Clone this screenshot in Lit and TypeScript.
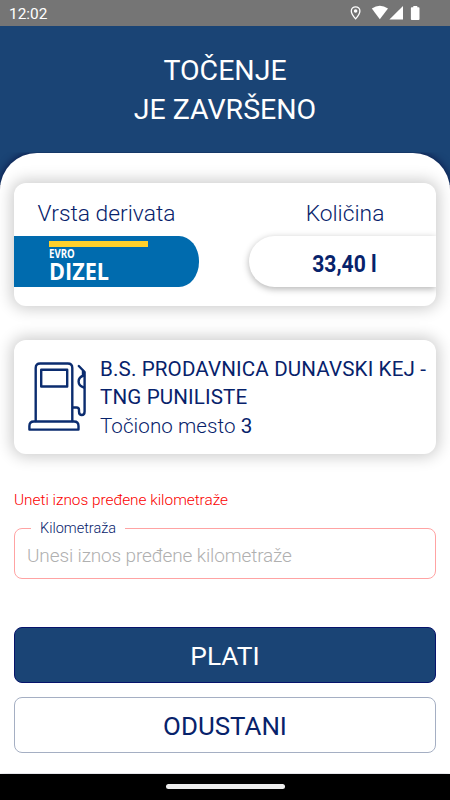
import { LitElement, html, css } from "lit";
import { customElement } from "lit/decorators.js";

@customElement("app-root")
export class AppRoot extends LitElement {
  static styles = css`
    :host {
      display: flex;
      flex-direction: column;
      width: 450px;
      height: 800px;
      overflow: hidden;
      background: #fff;
      color: #07226b;
      font-family: Roboto, "Liberation Sans", sans-serif;
    }
    * { box-sizing: border-box; }
    span, h1, p { white-space: nowrap; margin: 0; }
    svg { display: block; }
    .status {
      height: 26px;
      flex: none;
      background: #757575;
      color: #fff;
      display: flex;
      justify-content: space-between;
      padding-left: 9px;
      font-size: 15.4px;
      line-height: 28px;
    }
    .head {
      height: 126.5px;
      flex: none;
      background: #1a4475;
      color: #fff;
      text-align: center;
      padding-top: 25px;
    }
    h1 { font-size: 28.5px; line-height: 39px; font-weight: 400; }
    .wrap { flex: 1; background: linear-gradient(#1a4475 32px, #fff 32px); min-height: 0; }
    .sheet {
      height: 621px;
      background: #fff;
      border-radius: 37px 37px 0 0;
      box-shadow: 0 0 9px rgba(0, 0, 50, .75);
      padding: 30.5px 14px 0;
    }
    .back { clip-path: inset(0); height: 621px; }
    .card {
      background: #fff;
      border-radius: 12px;
      box-shadow: 0 0 15px 3px rgba(0, 0, 0, .2);
    }
    .fuel {
      height: 122.5px;
      display: grid;
      grid-template-columns: 185px 187px;
      grid-template-rows: 52.5px 51px;
      justify-content: space-between;
      text-align: center;
      overflow: hidden;
    }
    .label { font-size: 22.8px; font-weight: 300; line-height: 62px; }
    .shift { padding-left: 5px; }
    .badge {
      background: #006bae;
      border-radius: 0 20px 20px 0 / 0 25px 25px 0;
      color: #fff;
      padding: 5px 0 0 35px;
      display: flex;
      flex-direction: column;
      align-items: flex-start;
      font-family: "Open Sans", "Noto Sans", sans-serif;
      font-weight: 700;
    }
    .stripe { width: 98.5px; height: 6px; background: #ffd02b; }
    .evro { font-size: 11.5px; line-height: 12px; margin-top: 1px; transform: scaleX(.84); transform-origin: 0 0; }
    .dizel { font-size: 24px; line-height: 22px; transform: scaleX(.9); transform-origin: 0 0; }
    .qty {
      border-radius: 26px 0 0 26px;
      box-shadow: 0 2px 7px rgba(0, 0, 0, .3);
      font-size: 24.5px;
      font-weight: 700;
      line-height: 56px;
      padding-left: 4px;
    }
    .qty span { display: inline-block; transform: scaleX(.86); }
    .station {
      height: 114px;
      margin-top: 34px;
      display: flex;
      gap: 14px;
      padding: 15.2px 0 0 14px;
      font-size: 20.6px;
      letter-spacing: .13px;
      line-height: 28.7px;
    }
    .station svg { margin-top: 6.8px; flex: none; }
    .light { font-weight: 300; letter-spacing: .05px; }
    .error { color: #fb0000; font-size: 15.4px; font-weight: 300; line-height: 20px; margin-top: 36px; letter-spacing: -.03px; }
    .field {
      margin: 0;
      margin-top: 10px;
      height: 59px;
      border: 1px solid #ffa3a3;
      border-radius: 8px;
      padding: 0 0 0 12px;
      min-width: 0;
    }
    legend { font-size: 14.5px; font-weight: 300; line-height: 17px; padding: 0 9px; margin-left: 4px; }
    .hint { color: #b0b0b0; font-size: 19px; font-weight: 300; line-height: 24px; margin-top: 7px; letter-spacing: -.13px; }
    .btn {
      width: 422px;
      height: 56px;
      display: block;
      border-radius: 8px;
      font-family: inherit;
      font-size: 26.3px;
      line-height: 54px;
      padding: 1px 0 0;
      text-align: center;
    }
    .pay { background: #1a4475; color: #fff; border: 1px solid #06136b; margin-top: 48px; }
    .cancel { background: #fff; color: #07226b; border: 1px solid #a5afc3; margin-top: 14px; font-size: 25.9px; }
    .nav { height: 26.5px; flex: none; background: #000; padding: 10px 0 0 165.5px; }
    .pill { width: 119px; height: 5px; border-radius: 3px; background: #eee; }
  `;

  render() {
    return html`
      <div class="status">
        <span>12:02</span>
        <svg width="105" height="26" viewBox="345 0 105 26" fill="#fff">
          <path d="M355.6 6.8a4.3 4.3 0 0 0-4.3 4.3c0 3.2 4.3 7.8 4.3 7.8s4.3-4.6 4.3-7.8a4.3 4.3 0 0 0-4.3-4.3z" fill="none" stroke="#fff" stroke-width="1.3" />
          <circle cx="355.6" cy="11" r="1.8" />
          <path d="M371.8 8.5Q379.8 3 388 8.5L379.8 19.3z" />
          <path d="M403 6v13.6h-13.6z" />
          <path d="M411.8 7.2h1.500V6h4v1.200h1.300q.9 0 .9.900v11q0 .9-.9.900h-6.800q-.9 0-.9-.9v-11q0-.9.900-.9z" />
        </svg>
      </div>
      <div class="head">
        <h1>TOČENJE<br />JE ZAVRŠENO</h1>
      </div>
      <div class="wrap">
        <div class="back">
          <div class="sheet">
            <div class="card fuel">
              <span class="label">Vrsta derivata</span>
              <span class="label shift">Količina</span>
              <div class="badge">
                <div class="stripe"></div>
                <span class="evro">EVRO</span>
                <span class="dizel">DIZEL</span>
              </div>
              <div class="qty"><span>33,40 l</span></div>
            </div>
            <div class="card station">
              <svg width="58" height="70" viewBox="0 0 58 70" fill="none" stroke="#0b2c6f" stroke-width="2.4" stroke-linecap="round" stroke-linejoin="round">
                <path d="M7.700 60V7Q7.700 2.500 12.200 2.500H39.800Q44.300 2.500 44.300 7V60" />
                <path d="M13.200 8.700H39.200V25.500H13.200z" />
                <path d="M1.400 68.600V65Q1.400 60.500 5.900 60.500H46Q50.500 60.500 50.500 65V68.600z" />
                <path d="M50.800 5L56.600 11V50.500Q56.600 54 53.800 54Q51 54 51 50.500V49Q51 46.500 48.500 46.500H45" />
                <path d="M56 14.500Q50.600 16 50.600 20.500Q50.600 25 56 26.500M55 10V14.500" />
              </svg>
              <div>
                <p>B.S. PRODAVNICA DUNAVSKI KEJ -</p>
                <p>TNG PUNILISTE</p>
                <p><span class="light">Točiono mesto</span> 3</p>
              </div>
            </div>
            <p class="error">Uneti iznos pređene kilometraže</p>
            <fieldset class="field">
              <legend>Kilometraža</legend>
              <p class="hint">Unesi iznos pređene kilometraže</p>
            </fieldset>
            <button class="btn pay">PLATI</button>
            <button class="btn cancel">ODUSTANI</button>
          </div>
        </div>
      </div>
      <div class="nav"><div class="pill"></div></div>
    `;
  }
}
